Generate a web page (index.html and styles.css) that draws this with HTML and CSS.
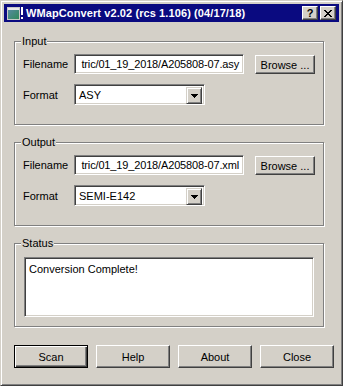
FILE: index.html
```html
<!DOCTYPE html>
<html>
<head>
<meta charset="utf-8">
<title>WMapConvert</title>
<link rel="stylesheet" href="styles.css">
</head>
<body>
<div class="window">
  <div class="titlebar">
    <svg class="app-icon" width="16" height="13" viewBox="0 0 16 13" shape-rendering="crispEdges">
      <defs>
        <linearGradient id="g" x1="0" y1="0" x2="1" y2="1">
          <stop offset="0" stop-color="#5a8aa8"/>
          <stop offset="1" stop-color="#2f8a5a"/>
        </linearGradient>
      </defs>
      <rect x="0" y="0" width="13" height="13" fill="#c8c8c8"/>
      <rect x="1" y="1" width="11" height="11" fill="url(#g)"/>
      <rect x="1" y="1" width="11" height="2" fill="#e8e8e8"/>
      <rect x="14" y="0" width="2" height="8" fill="#ffffff"/>
      <rect x="14" y="10" width="2" height="2" fill="#ffffff"/>
    </svg>
    <span class="title-text">WMapConvert v2.02 (rcs 1.106) (04/17/18)</span>
    <button class="cap-btn help-btn">?</button>
    <button class="cap-btn close-btn" aria-label="Close">
      <svg width="8" height="7" viewBox="0 0 8 7" shape-rendering="crispEdges">
        <path d="M0 0h2v1h1v1h2v-1h1v-1h2v1h-1v1h-1v1h-1v1h1v1h1v1h1v1h-2v-1h-1v-1h-2v1h-1v1h-2v-1h1v-1h1v-1h1v-1h-1v-1h-1v-1h-1z" fill="#000"/>
      </svg>
    </button>
  </div>

  <div class="group group-first">
    <span class="group-title">Input</span>
    <div class="row">
      <span class="label">Filename</span>
      <div class="edit field"><span class="field-text">tric/01_19_2018/A205808-07.asy</span></div>
      <button class="btn browse">Browse ...</button>
    </div>
    <div class="row row-second">
      <span class="label">Format</span>
      <div class="edit combo">
        <span class="combo-text">ASY</span>
        <span class="combo-btn">
          <svg width="7" height="4" viewBox="0 0 7 4" shape-rendering="crispEdges"><path d="M0 0h7v1h-1v1h-1v1h-1v1h-1v-1h-1v-1h-1v-1h-1z" fill="#000"/></svg>
        </span>
      </div>
    </div>
  </div>

  <div class="group">
    <span class="group-title">Output</span>
    <div class="row">
      <span class="label">Filename</span>
      <div class="edit field"><span class="field-text">tric/01_19_2018/A205808-07.xml</span></div>
      <button class="btn browse">Browse ...</button>
    </div>
    <div class="row row-second">
      <span class="label">Format</span>
      <div class="edit combo">
        <span class="combo-text">SEMI-E142</span>
        <span class="combo-btn">
          <svg width="7" height="4" viewBox="0 0 7 4" shape-rendering="crispEdges"><path d="M0 0h7v1h-1v1h-1v1h-1v1h-1v-1h-1v-1h-1v-1h-1z" fill="#000"/></svg>
        </span>
      </div>
    </div>
  </div>

  <div class="group group-status">
    <span class="group-title">Status</span>
    <div class="edit status-box">Conversion Complete!</div>
  </div>

  <div class="button-row">
    <button class="btn action default">Scan</button>
    <button class="btn action">Help</button>
    <button class="btn action">About</button>
    <button class="btn action">Close</button>
  </div>
</div>
</body>
</html>
```

FILE: styles.css
```css
html, body {
  margin: 0;
  padding: 0;
  background: #d4d0c8;
}

body {
  font-family: "Liberation Sans", Arial, sans-serif;
  font-size: 11px;
  color: #000;
}

.window {
  width: 343px;
  height: 386px;
  box-sizing: border-box;
  border: 1px solid;
  border-color: #d4d0c8 #404040 #404040 #d4d0c8;
  box-shadow: inset 1px 1px #ffffff, inset -1px -1px #808080;
  padding: 3px;
  background: #d4d0c8;
  display: flex;
  flex-direction: column;
  overflow: hidden;
}

.titlebar {
  height: 18px;
  flex: none;
  background: #0a0a80;
  display: flex;
  align-items: center;
  padding: 0 3px 0 3px;
  color: #fff;
  font-weight: bold;
  font-size: 11px;
}

.app-icon {
  flex: none;
  display: block;
}

.title-text {
  flex: 1;
  margin-left: 3px;
  white-space: nowrap;
  line-height: 18px;
  letter-spacing: 0.1px;
}

.cap-btn {
  width: 16px;
  height: 14px;
  box-sizing: border-box;
  padding: 0;
  margin: 0;
  background: #d4d0c8;
  border: 1px solid;
  border-color: #ffffff #404040 #404040 #ffffff;
  box-shadow: inset -1px -1px #808080;
  display: flex;
  align-items: center;
  justify-content: center;
  font-family: "Liberation Sans", Arial, sans-serif;
  font-weight: bold;
  font-size: 11px;
  line-height: 12px;
  color: #000;
}

.close-btn {
  margin-left: 2px;
}

.close-btn svg {
  display: block;
}

.group {
  position: relative;
  flex: none;
  margin: 17px 0 0 10px;
  width: 310px;
  box-sizing: border-box;
  border: 1px solid #808080;
  box-shadow: inset 1px 1px #ffffff, 1px 1px #ffffff;
  padding: 11px 0 19px 8px;
}

.group-first {
  margin-top: 19px;
}

.group-title {
  position: absolute;
  top: -7px;
  left: 6px;
  padding: 0 1px;
  background: #d4d0c8;
  line-height: 13px;
}

.row {
  display: flex;
  align-items: center;
}

.row-second {
  margin-top: 10px;
}

.label {
  width: 51px;
  flex: none;
  white-space: nowrap;
}

.edit {
  box-sizing: border-box;
  background: #ffffff;
  border: 1px solid;
  border-color: #808080 #ffffff #ffffff #808080;
  box-shadow: inset 1px 1px #404040, inset -1px -1px #d4d0c8;
}

.field {
  width: 170px;
  height: 20px;
  flex: none;
  display: flex;
  justify-content: flex-end;
  align-items: center;
  overflow: hidden;
  padding: 0 4px 0 2px;
  white-space: nowrap;
}

.field-text {
  flex: none;
  letter-spacing: -0.15px;
}

.btn {
  box-sizing: border-box;
  background: #d4d0c8;
  border: 1px solid;
  border-color: #ffffff #404040 #404040 #ffffff;
  box-shadow: inset -1px -1px #808080;
  font-family: "Liberation Sans", Arial, sans-serif;
  font-size: 11px;
  color: #000;
  padding: 0;
  margin: 0;
  display: flex;
  align-items: center;
  justify-content: center;
  white-space: nowrap;
}

.browse {
  width: 60px;
  height: 19px;
  margin-left: 11px;
  align-self: flex-start;
  margin-top: 2px;
}

.combo {
  width: 131px;
  height: 21px;
  flex: none;
  display: flex;
  padding: 2px;
}

.combo-text {
  flex: 1;
  padding-left: 2px;
  line-height: 17px;
  white-space: nowrap;
}

.combo-btn {
  width: 16px;
  height: 17px;
  box-sizing: border-box;
  background: #d4d0c8;
  border: 1px solid;
  border-color: #d4d0c8 #404040 #404040 #d4d0c8;
  box-shadow: inset 1px 1px #ffffff, inset -1px -1px #808080;
  display: flex;
  align-items: center;
  justify-content: center;
}

.combo-btn svg {
  display: block;
}

.group-status {
  padding: 13px 0 9px 9px;
}

.status-box {
  width: 290px;
  height: 60px;
  padding: 5px 4px;
  line-height: 13px;
}

.button-row {
  flex: none;
  display: flex;
  gap: 8px;
  margin: 18px 0 0 10px;
}

.action {
  width: 74px;
  height: 23px;
}

.action.default {
  border: 1px solid #000000;
  box-shadow: inset 1px 1px #ffffff, inset -1px -1px #404040, inset -2px -2px #808080;
}
```
